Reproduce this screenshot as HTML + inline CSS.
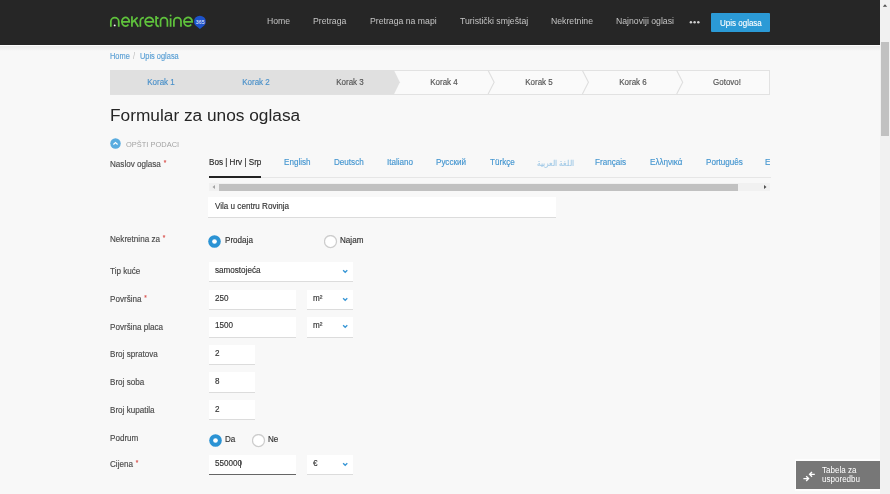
<!DOCTYPE html>
<html><head><meta charset="utf-8"><style>
html,body{margin:0;padding:0;width:890px;height:494px;overflow:hidden;background:#f8f8f8}
body{position:relative;font-family:"Liberation Sans",sans-serif}
.t{position:absolute;white-space:nowrap;line-height:1;transform-origin:0 84.67%;will-change:transform}
.r{position:absolute}
</style></head><body>
<div class="r" style="left:0.00px;top:46.00px;width:880.00px;height:5.00px;background:linear-gradient(#ebebeb,#f8f8f8)"></div>
<div class="r" style="left:0.00px;top:45.00px;width:880.00px;height:1.20px;background:#fcfcfc"></div>
<div class="r" style="left:0.00px;top:0.00px;width:880.00px;height:45.00px;background:#262626"></div>
<svg class="r" style="left:0;top:0" width="220" height="40" viewBox="0 0 220 40"><g fill="none" stroke="#5fc23c" stroke-width="1.75"><path d="M110.85 26.8 V21.55 A3.95 3.95 0 0 1 118.75 21.55 V26.8"/><path d="M121.80 21.75 H129.30 A3.75 4.30 0 1 0 128.42 24.51"/><path d="M131.95 16.2 V26.8 M132.3 22.4 L137.6 17.4 M134.4 20.4 L138.3 26.8"/><path d="M140.35 26.8 V21.2 A3.6 3.6 0 0 1 143.9 17.6"/><path d="M145.05 21.75 H153.45 A4.20 4.30 0 1 0 152.47 24.51"/><path d="M156.1 15.9 V24.0 A2.8 2.8 0 0 0 158.9 26.3 M155.2 18.0 H158.6"/><path d="M160.55 26.8 V21.02 A3.42 3.42 0 0 1 167.40 21.02 V26.8"/><path d="M170.6 18.2 V26.8"/><path d="M173.90 26.8 V21.15 A3.55 3.55 0 0 1 181.00 21.15 V26.8"/><path d="M183.90 21.75 H192.20 A4.15 4.30 0 1 0 191.23 24.51"/></g><circle cx="170.6" cy="15.5" r="0.95" fill="#5fc23c"/><circle cx="114.7" cy="25.4" r="0.95" fill="#fff"/><path d="M199.9 29.1 L195.6 25.6 A5.9 5.9 0 1 1 204.2 25.6 Z" fill="#1d52c9"/><text x="200.3" y="23.8" font-size="5.1" font-family="Liberation Sans" fill="#f4f6ff" text-anchor="middle" letter-spacing="0.25">365</text></svg>
<div class="t" style="left:267.00px;top:17px;font-size:8.7px;color:#c4c4c4;transform:scaleY(1.06);">Home</div>
<div class="t" style="left:313.20px;top:17px;font-size:8.7px;color:#c4c4c4;transform:scaleY(1.06);">Pretraga</div>
<div class="t" style="left:369.80px;top:17px;font-size:8.7px;color:#c4c4c4;transform:scaleY(1.06);">Pretraga na mapi</div>
<div class="t" style="left:459.50px;top:17px;font-size:8.7px;color:#c4c4c4;transform:scaleY(1.06);">Turistički smještaj</div>
<div class="t" style="left:550.90px;top:17px;font-size:8.7px;color:#c4c4c4;transform:scaleY(1.06);">Nekretnine</div>
<div class="t" style="left:616.00px;top:17px;font-size:8.7px;color:#c4c4c4;transform:scaleY(1.06);">Najnoviji oglasi</div>
<svg class="r" style="left:686px;top:18px" width="16" height="8" viewBox="686 18 16 8"><circle cx="690.9" cy="22.3" r="1.25" fill="#d0d0d0"/><circle cx="694.6" cy="22.3" r="1.25" fill="#d0d0d0"/><circle cx="698.3" cy="22.3" r="1.25" fill="#d0d0d0"/></svg>
<div class="r" style="left:711.10px;top:13.10px;width:59.10px;height:18.80px;background:#2b9ad6;border-radius:1px"></div>
<div class="t" style="left:719.80px;top:20px;font-size:8.0px;color:#ffffff;transform:scaleY(1.15);-webkit-text-stroke:0.1px currentColor;">Upis oglasa</div>
<div class="t" style="left:110.10px;top:53px;font-size:7.42px;color:#5a9fd4;transform:scaleY(1.12);-webkit-text-stroke:0.15px currentColor;">Home</div>
<div class="t" style="left:132.90px;top:53px;font-size:7.42px;color:#bbb;transform:scaleY(1.12);">/</div>
<div class="t" style="left:139.50px;top:53px;font-size:7.42px;color:#5a9fd4;transform:scaleY(1.12);-webkit-text-stroke:0.15px currentColor;">Upis oglasa</div>
<div class="r" style="left:110.00px;top:70.00px;width:660.00px;height:24.60px;background:#fafafa;border:1px solid #e2e2e2;box-sizing:border-box"></div>
<svg class="r" style="left:110px;top:70px" width="660" height="25" viewBox="0 0 660 25"><polygon points="0,0 283.86,0 289.86,12.3 283.86,24.6 0,24.6" fill="#e0e0e0"/><polyline points="378.14,0.5 384.14,12.3 378.14,24.1" fill="none" stroke="#dedede" stroke-width="1.1"/><polyline points="472.43,0.5 478.43,12.3 472.43,24.1" fill="none" stroke="#dedede" stroke-width="1.1"/><polyline points="566.71,0.5 572.71,12.3 566.71,24.1" fill="none" stroke="#dedede" stroke-width="1.1"/></svg>
<div class="t" style="left:121.44px;width:80px;text-align:center;top:79px;font-size:8px;color:#4a90c9;transform:scaleY(1.06);-webkit-text-stroke:0.15px currentColor">Korak 1</div>
<div class="t" style="left:215.73px;width:80px;text-align:center;top:79px;font-size:8px;color:#4a90c9;transform:scaleY(1.06);-webkit-text-stroke:0.15px currentColor">Korak 2</div>
<div class="t" style="left:310.01px;width:80px;text-align:center;top:79px;font-size:8px;color:#555;transform:scaleY(1.06);-webkit-text-stroke:0.15px currentColor">Korak 3</div>
<div class="t" style="left:404.30px;width:80px;text-align:center;top:79px;font-size:8px;color:#555;transform:scaleY(1.06);-webkit-text-stroke:0.15px currentColor">Korak 4</div>
<div class="t" style="left:498.59px;width:80px;text-align:center;top:79px;font-size:8px;color:#555;transform:scaleY(1.06);-webkit-text-stroke:0.15px currentColor">Korak 5</div>
<div class="t" style="left:592.87px;width:80px;text-align:center;top:79px;font-size:8px;color:#555;transform:scaleY(1.06);-webkit-text-stroke:0.15px currentColor">Korak 6</div>
<div class="t" style="left:687.16px;width:80px;text-align:center;top:79px;font-size:8px;color:#555;transform:scaleY(1.06);-webkit-text-stroke:0.15px currentColor">Gotovo!</div>
<div class="t" style="left:110.40px;top:107px;font-size:17.3px;color:#262626;">Formular za unos oglasa</div>
<svg class="r" style="left:109.6px;top:137.7px" width="11" height="11" viewBox="0 0 11 11"><circle cx="5.5" cy="5.5" r="5.25" fill="#5aacdf"/><polyline points="3.4,6.5 5.5,4.5 7.6,6.5" fill="none" stroke="#fff" stroke-width="1.2"/></svg>
<div class="t" style="left:126.40px;top:141px;font-size:7.47px;color:#a3a3a3;transform:scaleY(1.06);">OPŠTI PODACI</div>
<div class="t" style="left:110.30px;top:161px;font-size:8.1px;color:#4b4b4b;transform:scaleY(1.06);-webkit-text-stroke:0.15px currentColor;">Naslov oglasa<span style="color:#d9534f;font-size:6.5px;margin-left:2.8px;position:relative;top:-1.6px">*</span></div>
<div class="r" style="left:0;top:0;width:770px;height:494px;overflow:hidden">
<div class="t" style="left:208.70px;top:159px;font-size:8.1px;color:#2a2a2a;transform:scaleY(1.06);-webkit-text-stroke:0.15px currentColor;">Bos | Hrv | Srp</div>
<div class="t" style="left:284.10px;top:159px;font-size:8.1px;color:#4596d0;transform:scaleY(1.06);-webkit-text-stroke:0.15px currentColor;">English</div>
<div class="t" style="left:333.70px;top:159px;font-size:8.1px;color:#4596d0;transform:scaleY(1.06);-webkit-text-stroke:0.15px currentColor;">Deutsch</div>
<div class="t" style="left:386.90px;top:159px;font-size:8.1px;color:#4596d0;transform:scaleY(1.06);-webkit-text-stroke:0.15px currentColor;">Italiano</div>
<div class="t" style="left:435.90px;top:159px;font-size:8.1px;color:#4596d0;transform:scaleY(1.06);-webkit-text-stroke:0.15px currentColor;">Русский</div>
<div class="t" style="left:489.70px;top:159px;font-size:8.1px;color:#4596d0;transform:scaleY(1.06);-webkit-text-stroke:0.15px currentColor;">Türkçe</div>
<div class="t" style="left:537.20px;top:159px;font-size:8.1px;color:#a3cae6;transform:scaleY(1.06);-webkit-text-stroke:0.15px currentColor;"><span style="font-size:7.6px;position:relative;top:0.8px">اللغة العربية</span></div>
<div class="t" style="left:595.40px;top:159px;font-size:8.1px;color:#4596d0;transform:scaleY(1.06);-webkit-text-stroke:0.15px currentColor;">Français</div>
<div class="t" style="left:650.00px;top:159px;font-size:8.1px;color:#4596d0;transform:scaleY(1.06);-webkit-text-stroke:0.15px currentColor;">Ελληνικά</div>
<div class="t" style="left:705.80px;top:159px;font-size:8.1px;color:#4596d0;transform:scaleY(1.06);-webkit-text-stroke:0.15px currentColor;">Português</div>
<div class="t" style="left:765.40px;top:159px;font-size:8.1px;color:#4596d0;transform:scaleY(1.06);-webkit-text-stroke:0.15px currentColor;">E</div>
</div>
<div class="r" style="left:208.70px;top:176.60px;width:561.90px;height:1.00px;background:#e6e6e6"></div>
<div class="r" style="left:208.70px;top:175.80px;width:52.30px;height:2.00px;background:#222"></div>
<div class="r" style="left:208.70px;top:183.00px;width:561.30px;height:8.30px;background:#f1f1f1"></div>
<div class="r" style="left:218.70px;top:183.60px;width:519.80px;height:7.10px;background:#c1c1c1"></div>
<svg class="r" style="left:211px;top:184px" width="6" height="6"><polygon points="4,1 1.5,3 4,5" fill="#a3a3a3"/></svg>
<svg class="r" style="left:762px;top:184px" width="6" height="6"><polygon points="2,1 4.5,3 2,5" fill="#505050"/></svg>
<div class="r" style="left:208.40px;top:197.00px;width:347.50px;height:20.80px;background:#fff;border-bottom:1px solid #dcdcdc;box-sizing:border-box"></div>
<div class="t" style="left:214.50px;top:203px;font-size:8.1px;color:#333;transform:scaleY(1.06);-webkit-text-stroke:0.15px currentColor;">Vila u centru Rovinja</div>
<div class="t" style="left:110.30px;top:236px;font-size:8.1px;color:#4b4b4b;transform:scaleY(1.06);-webkit-text-stroke:0.15px currentColor;">Nekretnina za<span style="color:#d9534f;font-size:6.5px;margin-left:2.8px;position:relative;top:-1.6px">*</span></div>
<svg class="r" style="left:208.45px;top:235.00px" width="13" height="13" viewBox="0 0 13 13"><circle cx="6.5" cy="6.5" r="6.3" fill="#2b93d4"/><circle cx="6.5" cy="6.5" r="2.35" fill="#fff"/></svg>
<div class="t" style="left:224.80px;top:237px;font-size:8.1px;color:#333;transform:scaleY(1.06);-webkit-text-stroke:0.15px currentColor;">Prodaja</div>
<svg class="r" style="left:323.90px;top:235.00px" width="14" height="14" viewBox="0 0 14 14"><circle cx="6.5" cy="6.55" r="6.0" fill="#fff" stroke="#cdcdcd" stroke-width="1.25"/></svg>
<div class="t" style="left:340.00px;top:237px;font-size:8.1px;color:#333;transform:scaleY(1.06);-webkit-text-stroke:0.15px currentColor;">Najam</div>
<div class="t" style="left:110.30px;top:268px;font-size:8.1px;color:#4b4b4b;transform:scaleY(1.06);-webkit-text-stroke:0.15px currentColor;">Tip kuće</div>
<div class="r" style="left:208.50px;top:262.00px;width:144.50px;height:19.90px;background:#fff;border-bottom:1px solid #dcdcdc;box-sizing:border-box"></div>
<div class="t" style="left:214.50px;top:267px;font-size:8.1px;color:#333;transform:scaleY(1.06);-webkit-text-stroke:0.15px currentColor;">samostojeća</div>
<svg class="r" style="left:341.90px;top:269.00px" width="7" height="5" viewBox="0 0 7 5"><polyline points="1.1,1.2 3.2,3.2 5.3,1.2" fill="none" stroke="#3796d5" stroke-width="1.35"/></svg>
<div class="t" style="left:110.30px;top:296px;font-size:8.1px;color:#4b4b4b;transform:scaleY(1.06);-webkit-text-stroke:0.15px currentColor;">Površina<span style="color:#d9534f;font-size:6.5px;margin-left:2.8px;position:relative;top:-1.6px">*</span></div>
<div class="r" style="left:208.50px;top:289.60px;width:87.10px;height:20.00px;background:#fff;border-bottom:1px solid #dcdcdc;box-sizing:border-box"></div>
<div class="t" style="left:214.50px;top:295px;font-size:8.1px;color:#333;transform:scaleY(1.06);-webkit-text-stroke:0.15px currentColor;">250</div>
<div class="r" style="left:306.50px;top:289.60px;width:46.50px;height:20.00px;background:#fff;border-bottom:1px solid #dcdcdc;box-sizing:border-box"></div>
<div class="t" style="left:312.80px;top:295px;font-size:8.1px;color:#333;transform:scaleY(1.06);-webkit-text-stroke:0.15px currentColor;">m²</div>
<svg class="r" style="left:341.90px;top:296.70px" width="7" height="5" viewBox="0 0 7 5"><polyline points="1.1,1.2 3.2,3.2 5.3,1.2" fill="none" stroke="#3796d5" stroke-width="1.35"/></svg>
<div class="t" style="left:110.30px;top:324px;font-size:8.1px;color:#4b4b4b;transform:scaleY(1.06);-webkit-text-stroke:0.15px currentColor;">Površina placa</div>
<div class="r" style="left:208.50px;top:317.20px;width:87.10px;height:20.40px;background:#fff;border-bottom:1px solid #dcdcdc;box-sizing:border-box"></div>
<div class="t" style="left:214.50px;top:322px;font-size:8.1px;color:#333;transform:scaleY(1.06);-webkit-text-stroke:0.15px currentColor;">1500</div>
<div class="r" style="left:306.50px;top:317.20px;width:46.50px;height:20.40px;background:#fff;border-bottom:1px solid #dcdcdc;box-sizing:border-box"></div>
<div class="t" style="left:312.80px;top:322px;font-size:8.1px;color:#333;transform:scaleY(1.06);-webkit-text-stroke:0.15px currentColor;">m²</div>
<svg class="r" style="left:341.90px;top:324.30px" width="7" height="5" viewBox="0 0 7 5"><polyline points="1.1,1.2 3.2,3.2 5.3,1.2" fill="none" stroke="#3796d5" stroke-width="1.35"/></svg>
<div class="t" style="left:110.30px;top:351px;font-size:8.1px;color:#4b4b4b;transform:scaleY(1.06);-webkit-text-stroke:0.15px currentColor;">Broj spratova</div>
<div class="r" style="left:208.50px;top:344.70px;width:46.60px;height:20.10px;background:#fff;border-bottom:1px solid #dcdcdc;box-sizing:border-box"></div>
<div class="t" style="left:214.50px;top:350px;font-size:8.1px;color:#333;transform:scaleY(1.06);-webkit-text-stroke:0.15px currentColor;">2</div>
<div class="t" style="left:110.30px;top:379px;font-size:8.1px;color:#4b4b4b;transform:scaleY(1.06);-webkit-text-stroke:0.15px currentColor;">Broj soba</div>
<div class="r" style="left:208.50px;top:372.40px;width:46.60px;height:20.20px;background:#fff;border-bottom:1px solid #dcdcdc;box-sizing:border-box"></div>
<div class="t" style="left:214.50px;top:378px;font-size:8.1px;color:#333;transform:scaleY(1.06);-webkit-text-stroke:0.15px currentColor;">8</div>
<div class="t" style="left:110.30px;top:407px;font-size:8.1px;color:#4b4b4b;transform:scaleY(1.06);-webkit-text-stroke:0.15px currentColor;">Broj kupatila</div>
<div class="r" style="left:208.50px;top:400.30px;width:46.60px;height:20.10px;background:#fff;border-bottom:1px solid #dcdcdc;box-sizing:border-box"></div>
<div class="t" style="left:214.50px;top:406px;font-size:8.1px;color:#333;transform:scaleY(1.06);-webkit-text-stroke:0.15px currentColor;">2</div>
<div class="t" style="left:110.30px;top:435px;font-size:8.1px;color:#4b4b4b;transform:scaleY(1.06);-webkit-text-stroke:0.15px currentColor;">Podrum</div>
<svg class="r" style="left:208.50px;top:434.20px" width="13" height="13" viewBox="0 0 13 13"><circle cx="6.5" cy="6.5" r="6.3" fill="#2b93d4"/><circle cx="6.5" cy="6.5" r="2.35" fill="#fff"/></svg>
<div class="t" style="left:224.80px;top:436px;font-size:8.1px;color:#333;transform:scaleY(1.06);-webkit-text-stroke:0.15px currentColor;">Da</div>
<svg class="r" style="left:251.65px;top:434.00px" width="14" height="14" viewBox="0 0 14 14"><circle cx="6.5" cy="6.55" r="6.0" fill="#fff" stroke="#cdcdcd" stroke-width="1.25"/></svg>
<div class="t" style="left:267.80px;top:436px;font-size:8.1px;color:#333;transform:scaleY(1.06);-webkit-text-stroke:0.15px currentColor;">Ne</div>
<div class="t" style="left:110.30px;top:461px;font-size:8.1px;color:#4b4b4b;transform:scaleY(1.06);-webkit-text-stroke:0.15px currentColor;">Cijena<span style="color:#d9534f;font-size:6.5px;margin-left:2.8px;position:relative;top:-1.6px">*</span></div>
<div class="r" style="left:208.50px;top:455.00px;width:87.10px;height:20.10px;background:#fff;border-bottom:1.1px solid #666;box-sizing:border-box"></div>
<div class="t" style="left:214.50px;top:460px;font-size:8.1px;color:#333;transform:scaleY(1.06);-webkit-text-stroke:0.15px currentColor;">550000</div>
<div class="r" style="left:240.40px;top:459.80px;width:0.70px;height:8.40px;background:#555"></div>
<div class="r" style="left:306.60px;top:455.00px;width:46.60px;height:20.00px;background:#fff;border-bottom:1px solid #dcdcdc;box-sizing:border-box"></div>
<div class="t" style="left:312.80px;top:460px;font-size:8.1px;color:#333;transform:scaleY(1.06);-webkit-text-stroke:0.15px currentColor;">€</div>
<svg class="r" style="left:341.90px;top:462.20px" width="7" height="5" viewBox="0 0 7 5"><polyline points="1.1,1.2 3.2,3.2 5.3,1.2" fill="none" stroke="#3796d5" stroke-width="1.35"/></svg>
<div class="r" style="left:794.80px;top:459.20px;width:85.20px;height:31.40px;background:#fdfdfd"></div>
<div class="r" style="left:795.90px;top:461.10px;width:84.10px;height:27.70px;background:#777"></div>
<div class="t" style="left:822.00px;top:467px;font-size:8.05px;color:#fff;transform:scaleY(1.1);">Tabela za</div>
<div class="t" style="left:822.00px;top:476px;font-size:8.05px;color:#fff;transform:scaleY(1.1);">usporedbu</div>
<svg class="r" style="left:803px;top:470px" width="13" height="13" viewBox="0 0 13 13" fill="none" stroke="#fff" stroke-width="1.35"><path d="M6.6 4.3 H11.8 M9.0 1.9 L6.6 4.3 L9.0 6.7"/><path d="M0.4 8.6 H5.6 M3.2 6.2 L5.6 8.6 L3.2 11.0"/></svg>
<div class="r" style="left:880.00px;top:0.00px;width:10.00px;height:494.00px;background:#f1f1f1"></div>
<div class="r" style="left:881.00px;top:42.20px;width:8.00px;height:94.20px;background:#c1c1c1"></div>
<svg class="r" style="left:882px;top:3px" width="6" height="5"><polygon points="0.8,3.8 3,1.2 5.2,3.8" fill="#505050"/></svg>
</body></html>
